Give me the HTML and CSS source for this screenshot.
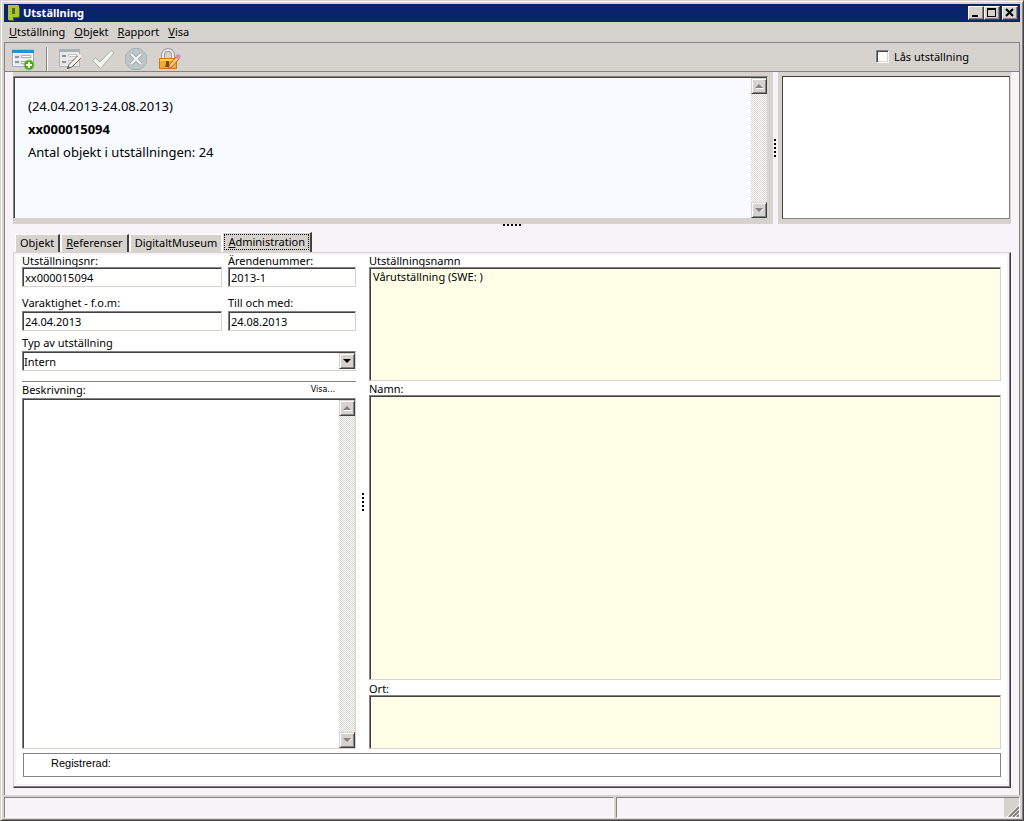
FILE: index.html
```html
<!DOCTYPE html>
<html lang="sv">
<head>
<meta charset="utf-8">
<title>Utställning</title>
<link rel="stylesheet" href="styles.css">
</head>
<body>
<div class="window">
  <header class="titlebar">
    <svg class="logo" width="14" height="16" viewBox="0 0 14 16"><path fill="#53662b" d="M2 1h9l2 2v9l-1 1H7v3H2z"/><path fill="#a9c62f" fill-rule="evenodd" d="M1 0h10l1 1v10l-1 1H6v3H1zM5 3v6h3V3z"/></svg>
    <h1 class="title">Utställning</h1>
    <div class="window-buttons">
      <button class="wbtn" aria-label="Minimera"><svg width="14" height="12"><path fill="#000" d="M3 8h6v2H3z"/></svg></button>
      <button class="wbtn" aria-label="Maximera"><svg width="14" height="12"><path fill="#000" fill-rule="evenodd" d="M2 1h9v9H2zM3 3v6h7V3z"/></svg></button>
      <button class="wbtn wbtn-close" aria-label="Stäng"><svg width="14" height="12"><path d="M3 2l7 7M10 2l-7 7" stroke="#000" stroke-width="2"/></svg></button>
    </div>
  </header>

  <nav class="menubar">
    <button class="menu"><u>U</u>tställning</button>
    <button class="menu"><u>O</u>bjekt</button>
    <button class="menu"><u>R</u>apport</button>
    <button class="menu"><u>V</u>isa</button>
  </nav>

  <div class="toolbar">
    <button class="tool" aria-label="Ny"><svg width="24" height="24" viewBox="0 0 24 24"><path fill="#fff" stroke="#9aa9b5" d="M1.500 2.500h21v17h-21z"/><path fill="#2791cf" d="M1 2h22v4H1z"/><path fill="#8ccbed" d="M1 2h22v1H1z"/><path fill="#e3e7ea" d="M3 7h18v5H3zM3 13h18v5H3z"/><path fill="#8b98a3" d="M4 9h4v2H4zM4 14h4v2H4z"/><path fill="#fff" stroke="#a8b3bc" d="M10.500 8.500h9v2h-9zM10.500 14.500h9v2h-9z"/><circle cx="18" cy="18" r="5" fill="#4aa51c" stroke="#89cc50"/><path stroke="#fff" stroke-width="2" d="M18 15v6M15 18h6"/></svg></button>
    <span class="divider"></span>
    <button class="tool" aria-label="Redigera"><svg width="24" height="24" viewBox="0 0 24 24"><path fill="#e9e9e7" stroke="#b3b4b4" d="M1.500 2.500h20v17h-20z"/><path fill="#a8b0b5" d="M1 2h21v3H1z"/><path fill="#8f9294" d="M4 8h4v2H4zM4 14h4v2H4z"/><path fill="#fff" stroke="#c3c4c3" d="M10.500 7.500h8v2h-8zM10.500 13.500h8v2h-8z"/><path fill="#f5f2eb" stroke="#656562" d="M9.500 21.500l1.500-4L20 8.500l3 2.500-9 9z"/><path fill="#f2eee2" d="M19 8l3-1 2 2-2 3z"/><path fill="#555" d="M9 22l1-3 2 2z"/></svg></button>
    <button class="tool" aria-label="Spara"><svg width="24" height="24" viewBox="0 0 24 24"><path fill="#f2f5ee" stroke="#a9b0a6" d="M1.500 13.500l3-2.500 4.500 4L20 3.500l3 2.500L9.500 21.500z"/></svg></button>
    <button class="tool" aria-label="Avbryt"><svg width="24" height="24" viewBox="0 0 24 24"><path fill="#bdc6c7" stroke="#a7b2b3" d="M8 1.500h8L22.500 8v8.500L17 22.500H7L1.500 16.500V8z"/><path stroke="#a3abad" stroke-width="4" d="M7 7l10 10M17 7L7 17"/><path stroke="#f4f5f4" stroke-width="2" d="M7 7l10 10M17 7L7 17"/></svg></button>
    <button class="tool" aria-label="Lås"><svg width="24" height="24" viewBox="0 0 24 24"><path fill="none" stroke="#9b9b98" stroke-width="4" d="M6 12V8a5 5 0 0 1 10 0v4"/><path fill="none" stroke="#e9e9e6" stroke-width="2" d="M6 12V8a5 5 0 0 1 10 0v4"/><path fill="#f4ac24" stroke="#c77c12" d="M2.500 11.500h17v10h-17z"/><path fill="#ffd25c" d="M3 12h16v2H3z"/><path fill="#7a4809" d="M9 14h3v3l1 3H8l1-3z"/><path fill="#f8c76e" stroke="#b66a25" d="M11.500 21.500l1-4L19 10l3 2-7 8z"/><path fill="#d58ac0" d="M18 9l3-2 3 2-2 4z"/></svg></button>
    <label class="lock"><input type="checkbox" class="check"><span>Lås utställning</span></label>
  </div>

  <main class="content">
    <section class="summary-row">
      <div class="summary-pane">
        <div class="sunken summary">
          <div class="summary-text">
            <p>(24.04.2013-24.08.2013)</p>
            <p><strong>xx000015094</strong></p>
            <p>Antal objekt i utställningen: 24</p>
          </div>
          <div class="scrollbar">
            <button class="sbtn" aria-label="Upp"><svg width="10" height="8"><path fill="#fff" d="M2 6h8v1H2z"/><path fill="#848284" d="M5 2l4 4H1z"/></svg></button>
            <button class="sbtn" aria-label="Ned"><svg width="10" height="8"><path fill="#fff" d="M9 3h1L6 7z"/><path fill="#848284" d="M1 2h8L5 6z"/></svg></button>
          </div>
        </div>
      </div>
      <div class="grip grip-v"><i></i><i></i><i></i><i></i><i></i></div>
      <div class="image-pane"><div class="image-box"></div></div>
    </section>
    <div class="grip grip-h"><i></i><i></i><i></i><i></i><i></i></div>

    <div class="tabs" role="tablist">
      <button class="tab" role="tab">Objekt</button>
      <button class="tab" role="tab"><u>R</u>eferenser</button>
      <button class="tab tab-flush" role="tab">DigitaltMuseum</button>
      <button class="tab tab-active" role="tab" aria-selected="true"><span class="focus"><u>A</u>dministration</span></button>
    </div>

    <section class="page">
      <form class="form">
        <div class="left">
          <div class="pair">
            <div class="field"><label for="nr">Utställningsnr:</label><input class="sunken input" id="nr" value="xx000015094"></div>
            <div class="field"><label for="arende">Ärendenummer:</label><input class="sunken input" id="arende" value="2013-1"></div>
          </div>
          <div class="pair pair-dates">
            <div class="field"><label for="from">Varaktighet - f.o.m:</label><input class="sunken input" id="from" value="24.04.2013"></div>
            <div class="field"><label for="tom">Till och med:</label><input class="sunken input" id="tom" value="24.08.2013"></div>
          </div>
          <div class="field">
            <label for="typ">Typ av utställning</label>
            <div class="sunken select-box">
              <select id="typ" class="select"><option>Intern</option></select>
              <span class="sbtn" aria-hidden="true"><svg width="10" height="8"><path fill="#000" d="M1 2h8L5 6z"/></svg></span>
            </div>
          </div>
          <div class="description">
            <div class="desc-head"><label for="beskr">Beskrivning:</label><button type="button" class="show">Visa...</button></div>
            <div class="sunken text-box">
              <textarea id="beskr" class="area"></textarea>
              <div class="scrollbar">
                <button type="button" class="sbtn" aria-label="Upp"><svg width="10" height="8"><path fill="#fff" d="M2 6h8v1H2z"/><path fill="#848284" d="M5 2l4 4H1z"/></svg></button>
                <button type="button" class="sbtn" aria-label="Ned"><svg width="10" height="8"><path fill="#fff" d="M9 3h1L6 7z"/><path fill="#848284" d="M1 2h8L5 6z"/></svg></button>
              </div>
            </div>
          </div>
        </div>
        <div class="grip grip-form"><i></i><i></i><i></i><i></i><i></i></div>
        <div class="right">
          <label for="namn1">Utställningsnamn</label>
          <textarea id="namn1" class="sunken area yellow area-title">Vårutställning (SWE: )</textarea>
          <label for="namn2">Namn:</label>
          <textarea id="namn2" class="sunken area yellow area-name"></textarea>
          <label for="ort">Ort:</label>
          <textarea id="ort" class="sunken area yellow area-place"></textarea>
        </div>
      </form>
      <div class="registered">Registrerad:</div>
    </section>
  </main>

  <footer class="statusbar">
    <div class="cell cell-main"></div>
    <div class="cell cell-side"><svg class="resize" width="15" height="19"><path fill="#d6d3ce" d="M0 0h15v19H0z"/><path stroke="#fff" d="M3 19L15 7M7 19l8-8M11 19l4-4"/><path stroke="#848284" stroke-width="2" d="M5 19L15 9M9 19l6-6M13 19l2-2"/></svg></div>
  </footer>
</div>
</body>
</html>
```
FILE: styles.css
```css
* { box-sizing: border-box; }

body {
  margin: 0;
  font: 11px/14px "Noto Sans", "Open Sans", sans-serif;
  color: #000;
  background: #d6d3ce;
}

button, input, select, textarea {
  font: inherit;
  color: inherit;
  margin: 0;
  padding: 0;
  border: 0;
  border-radius: 0;
  background: none;
}

svg { display: block; }
p, h1 { margin: 0; }

.window {
  display: flex;
  flex-direction: column;
  min-height: 100vh;
  background: #d6d3ce;
  border: 1px solid #d6d3ce;
  border-right-color: #424142;
  border-bottom-color: #424142;
  box-shadow: inset 1px 1px #fff, inset -1px -1px #848284;
  padding: 3px 3px 2px;
}

.titlebar {
  display: flex;
  align-items: center;
  height: 18px;
  padding: 0 2px 0 3px;
  background: #08246b;
  color: #fff;
}
.title { margin-left: 2px; font-size: 11px; line-height: 16px; font-weight: 700; }
.window-buttons { display: flex; margin-left: auto; }
.wbtn {
  width: 16px;
  height: 14px;
  overflow: hidden;
  background: #d6d3ce;
  border: 1px solid;
  border-color: #fff #424142 #424142 #fff;
  box-shadow: inset -1px -1px #848284;
}
.wbtn-close { margin-left: 2px; }

.menubar { display: flex; gap: 9px; height: 20px; padding-left: 5px; }

.toolbar {
  display: flex;
  align-items: center;
  height: 30px;
  padding: 4px 50px 0 6px;
  border: 1px solid #848284;
  overflow: hidden;
}
.tool { margin-right: 9px; }
.divider { width: 2px; height: 24px; margin: 0 10px 0 2px; border-left: 1px solid #848284; background: #fff; }
.lock { display: flex; align-items: center; gap: 5px; margin: 0 0 5px auto; }
.check {
  appearance: none;
  width: 13px;
  height: 13px;
  background: #fff;
  border: 1px solid;
  border-color: #848284 #fff #fff #848284;
  box-shadow: inset 1px 1px #424142, inset -1px -1px #d6d3ce;
}

.sunken {
  border: 1px solid;
  border-color: #848284 #d6d3ce #d6d3ce #848284;
  box-shadow: inset 1px 1px #424142;
  background: #fff;
}

.content {
  flex: 1;
  display: flex;
  flex-direction: column;
  padding: 0 8px 7px;
  background: #f7f3f7;
  border: solid #848284;
  border-width: 0 1px;
}

.summary-row { display: flex; height: 152px; }
.summary-pane { flex: 1; display: flex; padding: 4px 5px 5px 0; background: #d6d3ce; }
.summary { flex: 1; display: flex; padding: 1px 0 0 1px; background: #f7fbff; }
.summary-text { flex: 1; padding: 17px 13px; font-size: 13px; line-height: 23px; }
.image-pane { width: 233px; padding: 4px 1px 5px 4px; background: #d6d3ce; }
.image-box {
  height: 100%;
  background: #fff;
  border: 1px solid;
  border-color: #424142 #848284 #848284 #424142;
}

.scrollbar {
  display: flex;
  flex-direction: column;
  justify-content: space-between;
  width: 16px;
  background: repeating-conic-gradient(#d6d3ce 0 25%, #fff 0 50%) 0 0 / 2px 2px;
}
.sbtn {
  display: grid;
  place-items: center;
  width: 16px;
  height: 16px;
  background: #d6d3ce;
  border: 1px solid;
  border-color: #d6d3ce #424142 #424142 #d6d3ce;
  box-shadow: inset 1px 1px #fff, inset -1px -1px #848284;
}

.grip { display: flex; gap: 2px; align-items: center; justify-content: center; }
.grip i { width: 2px; height: 2px; background: #000; }
.grip-v { flex-direction: column; width: 5px; padding-right: 1px; }
.grip-h { height: 2px; }
.grip-form { flex-direction: column; width: 13px; }

.tabs { display: flex; align-items: flex-end; gap: 1px; height: 26px; padding-left: 2px; }
.tab {
  height: 18px;
  padding: 0 4px 1px;
  background: #d6d3ce;
  border: solid;
  border-width: 1px 2px 0 1px;
  border-color: #fff #424142 #fff #fff;
}
.tab-flush { border-right-width: 0; }
.tab-active { height: 20px; padding: 0 1px 2px; }
.focus { display: block; padding: 0 3px; border: 1px dotted #000; }

.page {
  flex: 1;
  display: flex;
  flex-direction: column;
  gap: 4px;
  padding: 2px 9px 10px 8px;
  background: #fff;
  border: 1px solid;
  border-color: #d6d3ce #424142 #424142 #d6d3ce;
  box-shadow: inset -1px -1px #848284, inset 2px 2px #f7f3f7, inset -3px -3px #f7f3f7;
}
.form { flex: 1; display: flex; }
.left { display: flex; flex-direction: column; width: 334px; }
.right { flex: 1; display: flex; flex-direction: column; }
.field { display: flex; flex-direction: column; }
.pair { display: grid; grid-template-columns: 200px 128px; gap: 6px; }
.pair-dates { margin: 10px 0 6px; }
.pair-dates label { margin-bottom: 2px; }
label { line-height: 12px; }
.input { width: 100%; height: 20px; padding: 0 2px; }
.field label, .right label { white-space: nowrap; }
.select-box { display: flex; height: 20px; padding: 1px 0 0 1px; margin-top: 2px; }
.select { flex: 1; appearance: none; }
.description {
  flex: 1;
  display: flex;
  flex-direction: column;
  margin-top: 10px;
  border-top: 1px solid #848284;
}
.desc-head { display: flex; justify-content: space-between; align-items: center; height: 16px; padding-right: 21px; }
.show { font: 8px/12px "DejaVu Sans", sans-serif; }
.text-box { flex: 1; display: flex; padding: 1px 0 0 1px; }
.area { resize: none; outline: 0; }
.text-box .area { flex: 1; }
.yellow { padding: 2px 3px; background: #ffffe7; }
.area-title { height: 114px; margin-bottom: 2px; }
.area-name { flex: 1; margin-bottom: 3px; }
.area-place { height: 54px; }

.registered {
  height: 24px;
  margin-left: 1px;
  padding: 2px 27px;
  border: 1px solid #848284;
  font: 11px/14px "Liberation Sans", sans-serif;
}

.statusbar { display: flex; gap: 2px; padding-top: 2px; }
.cell {
  height: 21px;
  background: #f7f3f7;
  border: 1px solid;
  border-color: #848284 #fff #fff #848284;
}
.cell-main { flex: 1; }
.cell-side { width: 404px; display: flex; justify-content: flex-end; }
```
